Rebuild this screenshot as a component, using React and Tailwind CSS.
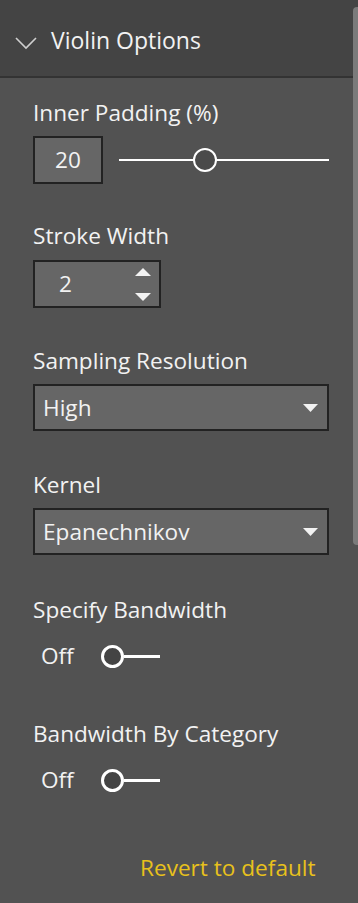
const font = { fontFamily: '"Open Sans", "Noto Sans", sans-serif' }

function Label({ children, className = '' }) {
  return <div className={`h-[30px] text-[22.6px] leading-[30px] text-[#f2f2f2] ${className}`}>{children}</div>
}

function Caret() {
  return (
    <svg width="15" height="8" viewBox="0 0 15 8">
      <path d="M0 0 H15 L7.5 8 Z" fill="#f2f2f2" />
    </svg>
  )
}

function Dropdown({ value }) {
  return (
    <div className="flex h-[47px] w-[296px] items-center justify-between border-2 border-[#222] bg-[#666] pl-[8px] pr-[9px]">
      <span className="text-[22.6px] leading-[30px] text-[#f2f2f2]">{value}</span>
      <Caret />
    </div>
  )
}

function Toggle() {
  return (
    <div className="flex h-[30px] items-center pl-[8px]">
      <span className="w-[60px] text-[22.6px] leading-[30px] text-[#f2f2f2]">Off</span>
      <div className="flex items-center">
        <div className="h-[23px] w-[23px] rounded-full border-[3px] border-white bg-[#444]" />
        <div className="h-[3px] w-[36px] bg-white" />
      </div>
    </div>
  )
}

export default function App() {
  return (
    <div className="relative h-[903px] w-[358px] overflow-hidden bg-[#525252]" style={font}>
      {/* Header */}
      <div className="flex h-[78px] items-start gap-[14px] border-b-2 border-[#333] bg-[#444] pl-[15px] pt-[25px]">
        <svg width="22" height="13" viewBox="0 0 22 13" className="mt-[12px]">
          <path d="M1 1 L11 11 L21 1" fill="none" stroke="#cfcfcf" strokeWidth="1.6" />
        </svg>
        <span className="text-[23px] leading-[30px] text-[#f2f2f2]">Violin Options</span>
      </div>

      <div className="flex flex-col pl-[33px] pt-[20px]">
        <Label>Inner Padding (%)</Label>
        <div className="mt-[8px] flex items-center">
          <div className="flex h-[48px] w-[70px] items-center justify-center border-2 border-[#222] bg-[#666] text-[22.6px] text-[#f2f2f2]">
            20
          </div>
          <div className="relative ml-[16px] flex h-[24px] w-[210px] items-center">
            <div className="h-[2px] w-full bg-white" />
            <div className="absolute left-[74px] top-0 h-[24px] w-[24px] rounded-full border-2 border-white bg-[#4a4a4a]" />
          </div>
        </div>

        <Label className="mt-[37px]">Stroke Width</Label>
        <div className="mt-[9px] flex h-[48px] w-[128px] items-center justify-between border-2 border-[#222] bg-[#666] pl-[24px] pr-[8px]">
          <span className="text-[22.6px] leading-[30px] text-[#f2f2f2]">2</span>
          <div className="flex flex-col gap-[17px]">
            <svg width="16" height="8" viewBox="0 0 16 8">
              <path d="M0 8 H16 L8 0 Z" fill="#f2f2f2" />
            </svg>
            <svg width="16" height="8" viewBox="0 0 16 8">
              <path d="M0 0 H16 L8 8 Z" fill="#f2f2f2" />
            </svg>
          </div>
        </div>

        <Label className="mt-[38px]">Sampling Resolution</Label>
        <div className="mt-[8px]">
          <Dropdown value="High" />
        </div>

        <Label className="mt-[39px]">Kernel</Label>
        <div className="mt-[8px]">
          <Dropdown value="Epanechnikov" />
        </div>

        <Label className="mt-[40px]">Specify Bandwidth</Label>
        <div className="mt-[16px]">
          <Toggle />
        </div>

        <Label className="mt-[48px]">Bandwidth By Category</Label>
        <div className="mt-[16px]">
          <Toggle />
        </div>

        <div className="mt-[58px] h-[30px] pl-[107px] text-[22.6px] leading-[30px] text-[#e8c11c]">Revert to default</div>
      </div>

      {/* scrollbar */}
      <div className="absolute right-0 top-[7px] h-[538px] w-[5px] rounded-l-[4px] bg-[#7b7b7b]" />
    </div>
  )
}
